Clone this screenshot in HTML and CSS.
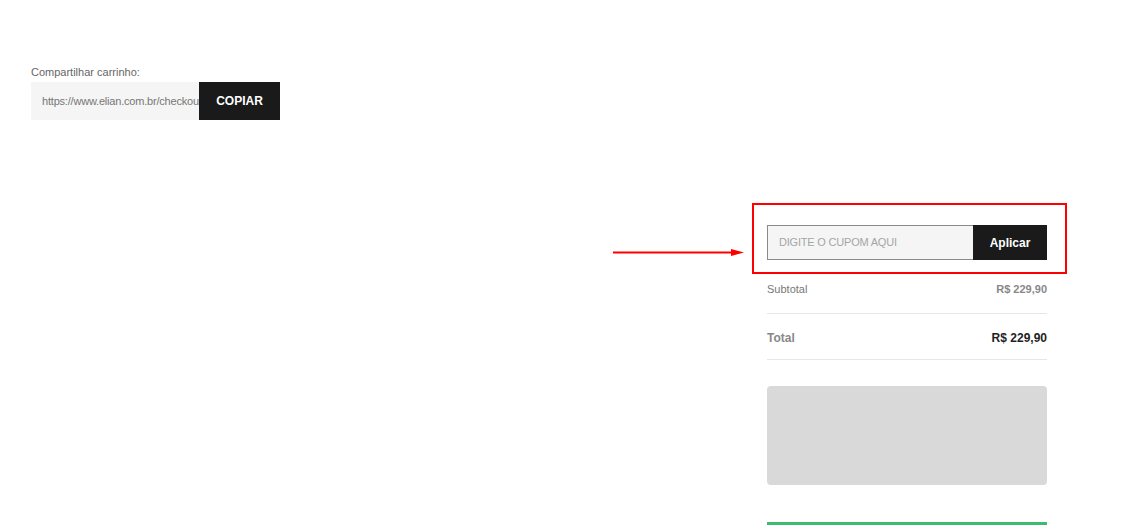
FILE: index.html
```html
<!DOCTYPE html>
<html lang="pt-BR">
<head>
<meta charset="utf-8">
<title>Carrinho</title>
<link rel="stylesheet" href="styles.css">
</head>
<body>
<main class="page">
  <section class="share">
    <div class="share-label">Compartilhar carrinho:</div>
    <div class="share-field">
      <div class="share-url">https://www.elian.com.br/checkou</div>
      <button class="share-btn">COPIAR</button>
    </div>
  </section>

  <section class="summary">
    <div class="coupon">
      <div class="highlight"></div>
      <svg class="arrow" width="132" height="9" viewBox="0 0 132 9">
        <line x1="0" y1="4.5" x2="120" y2="4.5" stroke="#ff0000" stroke-width="2"/>
        <polygon points="118,1 131,4.5 118,8" fill="#ff0000"/>
      </svg>
      <div class="coupon-input">DIGITE O CUPOM AQUI</div>
      <button class="coupon-btn">Aplicar</button>
    </div>
    <div class="row subtotal">
      <span class="row-label">Subtotal</span>
      <span class="row-value">R$ 229,90</span>
    </div>
    <div class="row total">
      <span class="row-label">Total</span>
      <span class="row-value">R$ 229,90</span>
    </div>
    <div class="placeholder"></div>
    <div class="green-bar"></div>
  </section>
</main>
</body>
</html>
```

FILE: styles.css
```css
* { box-sizing: border-box; }
html, body { margin: 0; padding: 0; background: #ffffff; }
body {
  font-family: "Liberation Sans", Arial, sans-serif;
  width: 1145px;
  height: 525px;
  overflow: hidden;
}
.page {
  display: flex;
  flex-direction: column;
  padding-top: 65px;
}
.share {
  padding-left: 31px;
}
.share-label {
  font-size: 11px;
  line-height: 14px;
  color: #666666;
  margin-bottom: 3px;
}
.share-field {
  display: flex;
  width: 249px;
  height: 38px;
}
.share-url {
  width: 168px;
  background: #f5f5f5;
  color: #777777;
  font-size: 11px;
  letter-spacing: -0.2px;
  line-height: 38px;
  padding-left: 11px;
  white-space: nowrap;
  overflow: hidden;
}
.share-btn {
  width: 81px;
  border: 0;
  margin: 0;
  padding: 0;
  background: #1a1a1a;
  color: #ffffff;
  font-family: "Liberation Sans", Arial, sans-serif;
  font-weight: bold;
  font-size: 12px;
}
.summary {
  align-self: flex-end;
  width: 280px;
  margin-right: 98px;
  margin-top: 105px;
  display: flex;
  flex-direction: column;
}
.coupon {
  position: relative;
  display: flex;
  height: 35px;
}
.highlight {
  position: absolute;
  left: -15px;
  top: -22px;
  right: -20px;
  bottom: -14px;
  border: 2px solid #ff0000;
  pointer-events: none;
}
.arrow {
  position: absolute;
  left: -154px;
  top: 23px;
}
.coupon-input {
  flex: 1;
  background: #f5f5f5;
  border: 1px solid #8a8a8a;
  border-right: 0;
  color: #a5a5a5;
  font-size: 11px;
  letter-spacing: -0.2px;
  line-height: 33px;
  padding-left: 11px;
}
.coupon-btn {
  width: 74px;
  border: 0;
  margin: 0;
  padding: 0;
  background: #1a1a1a;
  color: #ffffff;
  font-family: "Liberation Sans", Arial, sans-serif;
  font-weight: bold;
  font-size: 12px;
}
.row {
  display: flex;
  justify-content: space-between;
  align-items: center;
  border-bottom: 1px solid #e2e7ec;
}
.subtotal {
  padding: 22px 0 17px;
  font-size: 11px;
  line-height: 14px;
}
.subtotal .row-label { color: #777777; }
.subtotal .row-value { color: #888888; font-weight: bold; }
.total {
  padding: 16px 0 13px;
  font-size: 12px;
  line-height: 16px;
  font-weight: bold;
}
.total .row-label { color: #888888; }
.total .row-value { color: #1f1f1f; }
.placeholder {
  margin-top: 26px;
  height: 99px;
  background: #d9d9d9;
  border-radius: 4px;
}
.green-bar {
  margin-top: 37px;
  height: 3px;
  background: #3cbb73;
}
```
